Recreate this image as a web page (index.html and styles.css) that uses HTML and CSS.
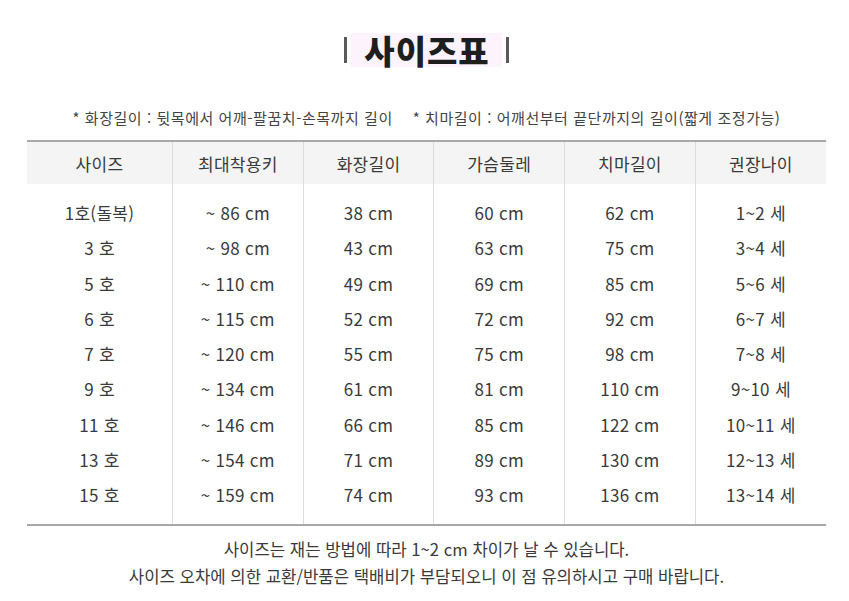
FILE: index.html
```html
<!DOCTYPE html>
<html lang="ko">
<head>
<meta charset="utf-8">
<link rel="stylesheet" href="styles.css">
</head>
<body>
<div class="page">
  <div class="title-wrap">
    <span class="bar"></span>
    <h1 class="title">사이즈표</h1>
    <span class="bar"></span>
  </div>
  <p class="notes"><span>* 화장길이 : 뒷목에서 어깨-팔꿈치-손목까지 길이</span><span>* 치마길이 : 어깨선부터 끝단까지의 길이(짧게 조정가능)</span></p>
  <table class="size-table">
    <thead>
      <tr><th class="c1">사이즈</th><th>최대착용키</th><th>화장길이</th><th>가슴둘레</th><th>치마길이</th><th>권장나이</th></tr>
    </thead>
    <tbody>
      <tr class="first"><td>1호(돌복)</td><td>~ 86 cm</td><td>38 cm</td><td>60 cm</td><td>62 cm</td><td>1~2 세</td></tr>
      <tr><td>3 호</td><td>~ 98 cm</td><td>43 cm</td><td>63 cm</td><td>75 cm</td><td>3~4 세</td></tr>
      <tr><td>5 호</td><td>~ 110 cm</td><td>49 cm</td><td>69 cm</td><td>85 cm</td><td>5~6 세</td></tr>
      <tr><td>6 호</td><td>~ 115 cm</td><td>52 cm</td><td>72 cm</td><td>92 cm</td><td>6~7 세</td></tr>
      <tr><td>7 호</td><td>~ 120 cm</td><td>55 cm</td><td>75 cm</td><td>98 cm</td><td>7~8 세</td></tr>
      <tr><td>9 호</td><td>~ 134 cm</td><td>61 cm</td><td>81 cm</td><td>110 cm</td><td>9~10 세</td></tr>
      <tr><td>11 호</td><td>~ 146 cm</td><td>66 cm</td><td>85 cm</td><td>122 cm</td><td>10~11 세</td></tr>
      <tr><td>13 호</td><td>~ 154 cm</td><td>71 cm</td><td>89 cm</td><td>130 cm</td><td>12~13 세</td></tr>
      <tr class="last"><td>15 호</td><td>~ 159 cm</td><td>74 cm</td><td>93 cm</td><td>136 cm</td><td>13~14 세</td></tr>
    </tbody>
  </table>
  <div class="footer">
    <p>사이즈는 재는 방법에 따라 1~2 cm 차이가 날 수 있습니다.</p>
    <p>사이즈 오차에 의한 교환/반품은 택배비가 부담되오니 이 점 유의하시고 구매 바랍니다.</p>
  </div>
</div>
</body>
</html>
```
FILE: styles.css
```css
html, body {
  margin: 0;
  padding: 0;
  background: #ffffff;
}
body {
  font-family: "Noto Sans CJK KR", "Noto Sans", sans-serif;
  color: #3a3a3a;
}
.page {
  width: 849px;
  height: 601px;
  padding-top: 33px;
  box-sizing: border-box;
  display: flex;
  flex-direction: column;
  align-items: center;
}
.title-wrap {
  display: flex;
  align-items: center;
  height: 34px;
  margin-left: 4px;
}
.bar {
  width: 3px;
  height: 26px;
  background: #5a5a5a;
}
.title {
  margin: 0 4px;
  height: 34px;
  padding: 0 12px 0 13px;
  background: #fcf3fc;
  font-size: 33px;
  font-weight: 900;
  line-height: 34px;
  letter-spacing: 1px;
  color: #1e1e1e;
}
.notes {
  margin: 41px 0 0;
  display: flex;
  gap: 20px;
  font-size: 15px;
  line-height: 20px;
  color: #444;
  letter-spacing: 0.55px;
  margin-left: 4px;
}
.size-table {
  margin-top: 12px;
  margin-left: 4px;
  width: 799px;
  border-collapse: collapse;
  table-layout: fixed;
  border-top: 2px solid #a8a8a8;
  border-bottom: 2px solid #a8a8a8;
  font-size: 17px;
  letter-spacing: 0.3px;
  color: #3a3a3a;
}
.size-table th, .size-table td {
  text-align: center;
  border-left: 1px solid #dcdcdc;
  padding: 0;
}
.size-table th:first-child, .size-table td:first-child {
  border-left: none;
}
.size-table th {
  background: #f4f4f4;
  height: 42px;
  font-weight: 400;
  color: #3a3a3a;
}
.size-table .c1 {
  width: 145px;
}
.size-table td {
  height: 35.25px;
}
.size-table tr.first td {
  padding-top: 11px;
}
.size-table tr.last td {
  padding-bottom: 12px;
}
.footer {
  margin-top: 10px;
  margin-left: 4px;
  text-align: center;
  font-size: 16.7px;
  color: #3a3a3a;
}
.footer p {
  margin: 0;
  line-height: 27px;
}
```
